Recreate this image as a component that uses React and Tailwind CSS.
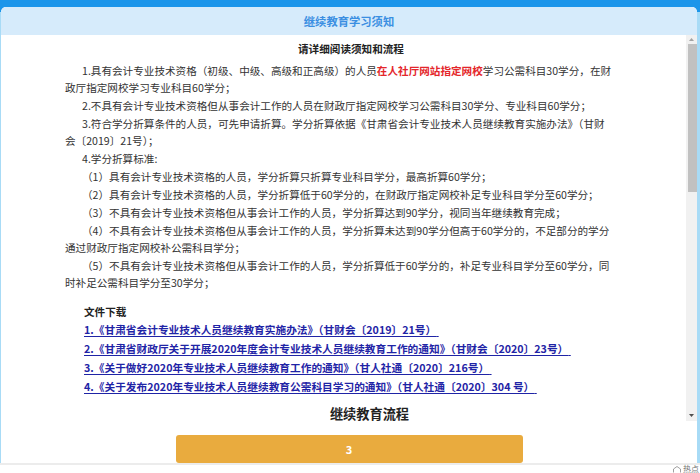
import { useState } from 'react';

const rules = [
  { id: 1, text: (<>1.具有会计专业技术资格（初级、中级、高级和正高级）的人员<b className="text-[#e4262b] font-bold">在人社厅网站指定网校</b>学习公需科目30学分，在财<br />政厅指定网校学习专业科目60学分；</>) },
  { id: 2, text: '2.不具有会计专业技术资格但从事会计工作的人员在财政厅指定网校学习公需科目30学分、专业科目60学分；' },
  { id: 3, text: (<>3.符合学分折算条件的人员，可先申请折算。学分折算依据《甘肃省会计专业技术人员继续教育实施办法》（甘财<br />会〔2019〕21号）；</>) },
  { id: 4, text: '4.学分折算标准:' },
  { id: 5, text: '（1）具有会计专业技术资格的人员，学分折算只折算专业科目学分，最高折算60学分；' },
  { id: 6, text: '（2）具有会计专业技术资格的人员，学分折算低于60学分的，在财政厅指定网校补足专业科目学分至60学分；' },
  { id: 7, text: '（3）不具有会计专业技术资格但从事会计工作的人员，学分折算达到90学分，视同当年继续教育完成；' },
  { id: 8, text: (<>（4）不具有会计专业技术资格但从事会计工作的人员，学分折算未达到90学分但高于60学分的，不足部分的学分<br />通过财政厅指定网校补公需科目学分；</>) },
  { id: 9, text: (<>（5）不具有会计专业技术资格但从事会计工作的人员，学分折算低于60学分的，补足专业科目学分至60学分，同<br />时补足公需科目学分至30学分；</>) },
];

const files = [
  '1.《甘肃省会计专业技术人员继续教育实施办法》（甘财会〔2019〕21号）',
  '2.《甘肃省财政厅关于开展2020年度会计专业技术人员继续教育工作的通知》（甘财会〔2020〕23号）',
  '3.《关于做好2020年专业技术人员继续教育工作的通知》（甘人社通〔2020〕216号）',
  '4.《关于发布2020年专业技术人员继续教育公需科目学习的通知》（甘人社通〔2020〕304 号）',
];

function FakeScrollbar() {
  return (
    <div className="w-[11px] shrink-0 bg-[#f1f1f1] flex flex-col">
      <div className="h-[9px] flex items-center justify-center">
        <svg width="5" height="3" viewBox="0 0 5 3"><path d="M0 3 L2.5 0 L5 3 Z" fill="#a3a3a3" /></svg>
      </div>
      <div className="ml-[2px] w-[9px] h-[148px] bg-[#c1c1c1]" />
      <div className="flex-1" />
      <div className="h-[12px] flex items-center justify-center">
        <svg width="5" height="3" viewBox="0 0 5 3"><path d="M0 0 L5 0 L2.5 3 Z" fill="#505050" /></svg>
      </div>
    </div>
  );
}

export default function App() {
  const [step] = useState(3);

  return (
    <div className="w-[700px] h-[473px] overflow-hidden bg-white font-['Noto_Sans_CJK_SC','Microsoft_YaHei',sans-serif] text-[#333]">
      <div className="h-[463px] pt-[7px] pl-[1px] pr-[3px] bg-[linear-gradient(#1b95ea_0,#1b95ea_12px,#a8dbf6_12px)]">
        <div className="h-full bg-white rounded-t-[5px] flex flex-col">

          {/* 标题栏 */}
          <div className="h-[28px] shrink-0 bg-[#d6ebfb] rounded-t-[5px] flex items-center justify-center">
            <h2 className="text-[11.3px] font-bold text-[#3b8fe2]">继续教育学习须知</h2>
          </div>

          {/* 须知内容 + 滚动条 */}
          <div className="h-[386px] shrink-0 flex">
            <div className="flex-1 pl-[64px] pr-[40px] pt-[5px] text-[10.6px] leading-[17px]">
              <h3 className="text-center font-bold text-[#222] pl-[17px] pr-[26px]">请详细阅读须知和流程</h3>
              <div className="mt-[5px] flex flex-col gap-[1px] whitespace-nowrap">
                {rules.map((r) => (
                  <p key={r.id} className="indent-[17px]">{r.text}</p>
                ))}
              </div>

              {/* 文件下载 */}
              <div className="mt-[12px] pl-[19px]">
                <h4 className="font-bold text-[#222]">文件下载</h4>
                <ul className="flex flex-col">
                  {files.map((f) => (
                    <li key={f} className="leading-[19px]">
                      <a href="#" className="text-[10.7px] font-bold text-[#1f24a6] underline underline-offset-2">{f}&nbsp;</a>
                    </li>
                  ))}
                </ul>
              </div>

              <h3 className="mt-[10px] text-center text-[13.2px] leading-[16px] font-bold text-[#222] pl-[28px]">继续教育流程</h3>
            </div>
            <FakeScrollbar />
          </div>

          {/* 流程按钮 */}
          <div className="pt-[14px]">
            <button className="block mx-auto w-[347px] h-[28px] rounded-[3px] bg-[#e9ab3e] text-white text-[11px] font-bold">
              {step}
            </button>
          </div>
        </div>
      </div>

      {/* 底部 */}
      <div className="h-[2px] bg-[#ececec]" />
      <div className="h-[8px] flex justify-end items-center pr-[1px]">
        <div className="flex items-center gap-[2px] whitespace-nowrap text-[8px] leading-[8px] text-[#777]">
          <svg width="8" height="7" viewBox="0 0 8 7" className="shrink-0">
            <path d="M0.5 6.5 V3 L4 0.5 L7.5 3 V6.5" fill="none" stroke="#888" strokeWidth="0.8" />
          </svg>
          <span>热点</span>
        </div>
      </div>
    </div>
  );
}
